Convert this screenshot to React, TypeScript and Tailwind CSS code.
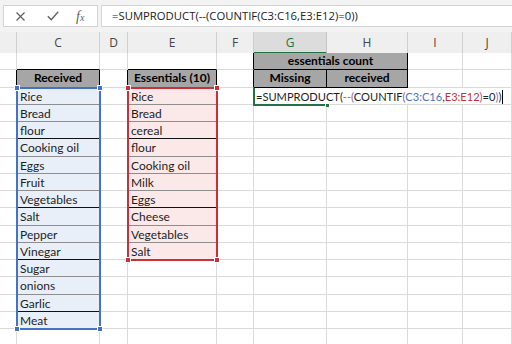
import React from "react";

const received = [
  "Rice",
  "Bread",
  "flour",
  "Cooking oil",
  "Eggs",
  "Fruit",
  "Vegetables",
  "Salt",
  "Pepper",
  "Vinegar",
  "Sugar",
  "onions",
  "Garlic",
  "Meat",
];
const essentials = [
  "Rice",
  "Bread",
  "cereal",
  "flour",
  "Cooking oil",
  "Milk",
  "Eggs",
  "Cheese",
  "Vegetables",
  "Salt",
];

const COLS = "grid grid-cols-[17px_83px_28px_89px_37px_73px_81px_55px_1fr]";
const LETTERS = ["", "C", "D", "E", "F", "G", "H", "I", "J"];
const DARK_ROWS = [5, 9, 12, 15];

function isGray(r: number, c: number) {
  return (r === 1 && (c === 5 || c === 6)) || (r === 2 && (c === 1 || c === 3 || c === 5 || c === 6));
}
function isData(r: number, c: number) {
  return (c === 1 && r >= 3 && r <= 16) || (c === 3 && r >= 3 && r <= 12);
}
function content(r: number, c: number): string {
  if (r === 1 && c === 5) return "essentials count";
  if (r === 2 && c === 1) return "Received";
  if (r === 2 && c === 3) return "Essentials (10)";
  if (r === 2 && c === 5) return "Missing";
  if (r === 2 && c === 6) return "received";
  if (c === 1 && r >= 3 && r <= 16) return received[r - 3];
  if (c === 3 && r >= 3 && r <= 12) return essentials[r - 3];
  return "";
}

function Cell({ r, c }: { r: number; c: number }) {
  const gray = isGray(r, c);
  const data = isData(r, c);
  const right = gray || isGray(r, c + 1) ? "border-r border-r-black" : "border-r border-r-[#dadada]";
  let bottom = "border-b border-b-[#dadada]";
  if (gray || isGray(r + 1, c)) bottom = "border-b border-b-black";
  else if (data) bottom = DARK_ROWS.includes(r) ? "border-b border-b-[#111]" : "border-b border-b-[#8e8e8e]";
  let bg = "bg-white";
  if (gray) bg = "bg-[#a6a6a6]";
  else if (data && c === 1) bg = "bg-[#e9eff8]";
  else if (data && c === 3) bg = "bg-[#fbe9e9]";
  const span = r === 1 && c === 5 ? "col-span-2" : "";
  const text = content(r, c);
  return (
    <div
      className={`${span} ${right} ${bottom} ${bg} flex items-center overflow-visible whitespace-nowrap ${
        gray ? "justify-center font-bold text-black" : "justify-start pl-[3px] pt-[2px] text-[#1e1e1e]"
      } text-[12px] leading-none`}
    >
      {text}
    </div>
  );
}

function Handle({ pos, color }: { pos: string; color: string }) {
  return <div className={`absolute w-[6px] h-[6px] border border-white ${color} ${pos}`} />;
}

function FormulaBar() {
  return (
    <div className="flex items-center h-[32px] bg-[#f3f3f3] pl-[3px] gap-[3px]">
      <div className="w-[95px] h-[22px] bg-white border border-[#d4d4d4] flex items-center">
        <svg width="9" height="9" viewBox="0 0 9 9" className="ml-[12px]">
          <path d="M0.5 0.5 L8.5 8.5 M8.5 0.5 L0.5 8.5" stroke="#5f5f5f" strokeWidth="1.2" fill="none" />
        </svg>
        <svg width="12" height="10" viewBox="0 0 12 10" className="ml-[22px]">
          <path d="M0.8 5.2 L4.3 8.7 L11.2 0.8" stroke="#5f5f5f" strokeWidth="1.3" fill="none" />
        </svg>
        <span className="ml-[17px] font-['Liberation_Serif',serif] italic text-[#5f5f5f] leading-none">
          <span className="text-[14px]">f</span>
          <span className="text-[10px]">x</span>
        </span>
      </div>
      <div className="flex-1 h-[22px] bg-white border border-[#d4d4d4] border-r-0 flex items-center pl-[10px] font-['Open_Sans',sans-serif] text-[11.3px] text-[#222] whitespace-nowrap">
        =SUMPRODUCT(--(COUNTIF(C3:C16,E3:E12)=0))
      </div>
    </div>
  );
}

function ColumnHeaders() {
  return (
    <div className={`${COLS} h-[21px] bg-[#efefef] font-['Open_Sans',sans-serif] text-[12px]`}>
      {LETTERS.map((l, i) =>
        l === "G" ? (
          <div
            key={i}
            className="border-r border-r-[#c6c6c6] border-b-2 border-b-[#217346] bg-[#dcdcdc] text-[#217346] flex items-center justify-center pt-[2px]"
          >
            {l}
          </div>
        ) : (
          <div key={i} className="border-r border-r-[#cfcfcf] border-b border-b-[#dadada] text-[#444] flex items-center justify-center">
            {l}
          </div>
        )
      )}
    </div>
  );
}

function EditText() {
  return (
    <span className="whitespace-nowrap">
      <span className="text-[#1e1e1e]">=SUMPRODUCT(</span>
      <span className="text-[#8d63b3]">--(</span>
      <span className="text-[#1e1e1e]">COUNTIF</span>
      <span className="text-[#b04a8c]">(</span>
      <span className="text-[#4a72c4]">C3:C16</span>
      <span className="text-[#1e1e1e]">,</span>
      <span className="text-[#c3323a]">E3:E12</span>
      <span className="text-[#b04a8c]">)</span>
      <span className="text-[#1e1e1e]">=0</span>
      <span className="text-[#8d63b3]">)</span>
      <span className="text-[#1e1e1e]">)</span>
    </span>
  );
}

function Sheet() {
  const rows = Array.from({ length: 17 }, (_, i) => i + 1);
  return (
    <div className={`relative ${COLS} auto-rows-[17.25px] font-['Lato',sans-serif]`}>
      {rows.map((r) =>
        Array.from({ length: 9 }, (_, c) => c)
          .filter((c) => !(r === 1 && c === 6))
          .map((c) => <Cell key={`${r}-${c}`} r={r} c={c} />)
      )}

      {/* Blue range C3:C16 */}
      <div className="absolute col-[2/3] row-[3/17] -top-px -left-px -right-px -bottom-px border-2 border-[#4472c4] z-10 pointer-events-none">
        <Handle pos="-top-[4px] -left-[4px]" color="bg-[#4472c4]" />
        <Handle pos="-top-[4px] -right-[4px]" color="bg-[#4472c4]" />
        <Handle pos="-bottom-[4px] -left-[4px]" color="bg-[#4472c4]" />
        <Handle pos="-bottom-[4px] -right-[4px]" color="bg-[#4472c4]" />
      </div>

      {/* Red range E3:E12 */}
      <div className="absolute col-[4/5] row-[3/13] -top-px -left-px -right-px -bottom-px border-2 border-[#c8303a] z-10 pointer-events-none">
        <Handle pos="-top-[4px] -left-[4px]" color="bg-[#c8303a]" />
        <Handle pos="-top-[4px] -right-[4px]" color="bg-[#c8303a]" />
        <Handle pos="-bottom-[4px] -left-[4px]" color="bg-[#c8303a]" />
        <Handle pos="-bottom-[4px] -right-[4px]" color="bg-[#c8303a]" />
      </div>

      {/* Active cell G3 */}
      <div className="absolute col-[6/7] row-[3/4] top-0 -left-px right-0 -bottom-px border-l-2 border-b-2 border-[#217346] z-10">
        <div className="absolute -right-[3px] -bottom-[4px] w-[5px] h-[5px] bg-[#217346] border border-white" />
      </div>
      <div className="absolute col-[6/7] row-[3/4] top-0 left-[1px] bottom-px w-[251px] bg-white z-20 flex items-center pl-[1px] pt-[2px] text-[11.1px] leading-none">
        <EditText />
        <span className="ml-[1px] w-px h-[14px] bg-black" />
      </div>
    </div>
  );
}

export default function App() {
  return (
    <div className="w-[512px] h-[344px] overflow-hidden bg-white">
      <FormulaBar />
      <ColumnHeaders />
      <Sheet />
    </div>
  );
}
